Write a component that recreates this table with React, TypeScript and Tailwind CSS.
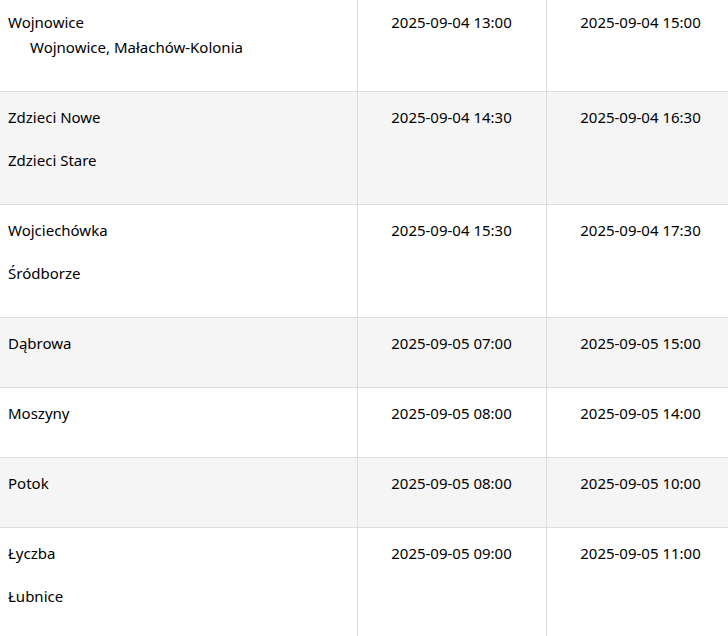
type Wiersz = { miejsca: string[]; podmiejsca?: string[]; od: string; do: string };

const wiersze: Wiersz[] = [
  { miejsca: ["Wojnowice"], podmiejsca: ["Wojnowice, Małachów-Kolonia"], od: "2025-09-04 13:00", do: "2025-09-04 15:00" },
  { miejsca: ["Zdzieci Nowe", "Zdzieci Stare"], od: "2025-09-04 14:30", do: "2025-09-04 16:30" },
  { miejsca: ["Wojciechówka", "Śródborze"], od: "2025-09-04 15:30", do: "2025-09-04 17:30" },
  { miejsca: ["Dąbrowa"], od: "2025-09-05 07:00", do: "2025-09-05 15:00" },
  { miejsca: ["Moszyny"], od: "2025-09-05 08:00", do: "2025-09-05 14:00" },
  { miejsca: ["Potok"], od: "2025-09-05 08:00", do: "2025-09-05 10:00" },
  { miejsca: ["Łyczba", "Łubnice"], od: "2025-09-05 09:00", do: "2025-09-05 11:00" },
];

export default function App() {
  return (
    <div className="w-[728px] h-[636px] overflow-hidden bg-white text-[15px] leading-[22px] text-black" style={{ fontFamily: '"Noto Sans", "Open Sans", sans-serif' }}>
      <table className="-mt-[4px] w-[735px] border-collapse table-fixed">
        <colgroup>
          <col className="w-[357px]" />
          <col className="w-[189px]" />
          <col className="w-[189px]" />
        </colgroup>
        <tbody>
          {wiersze.map((w, i) => (
            <tr key={i} className={i % 2 === 1 ? "bg-[#f5f5f5]" : "bg-white"}>
              <td className="border border-[#dddddd] border-l-0 align-top pl-[8px] pt-[14px] pb-[33px]">
                <div className="flex flex-col gap-[21px]">
                  {w.miejsca.map((m) => (
                    <div key={m}>{m}</div>
                  ))}
                </div>
                {w.podmiejsca && (
                  <div className="mt-[3px] pl-[22px]">
                    {w.podmiejsca.map((p) => (
                      <div key={p}>{p}</div>
                    ))}
                  </div>
                )}
              </td>
              <td className="border border-[#dddddd] align-top text-center pt-[14px]">{w.od}</td>
              <td className="border border-[#dddddd] align-top text-center pt-[14px]">{w.do}</td>
            </tr>
          ))}
        </tbody>
      </table>
    </div>
  );
}
